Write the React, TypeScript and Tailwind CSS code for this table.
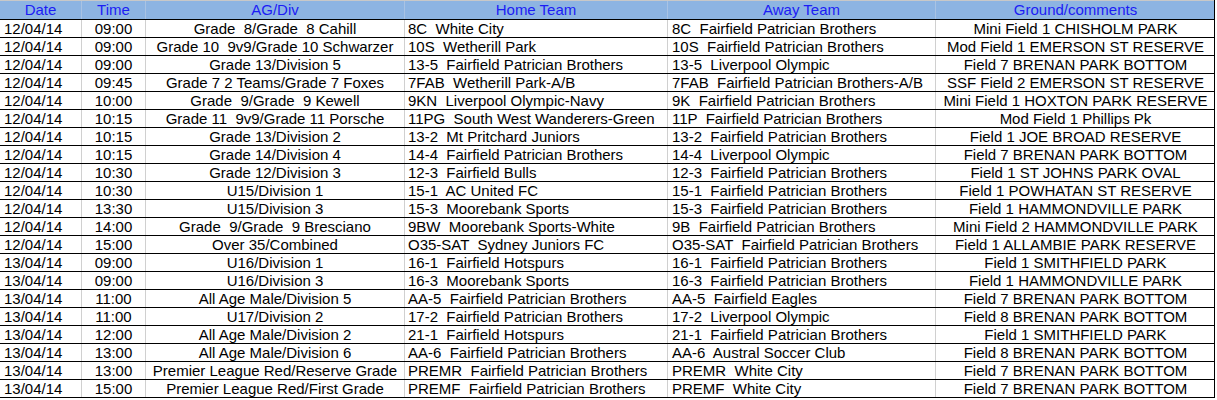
type Fixture = {
  date: string;
  time: string;
  div: string;
  home: string;
  away: string;
  ground: string;
};

const fixtures: Fixture[] = [
  { date: "12/04/14", time: "09:00", div: "Grade  8/Grade  8 Cahill", home: "8C  White City", away: "8C  Fairfield Patrician Brothers", ground: "Mini Field 1 CHISHOLM PARK" },
  { date: "12/04/14", time: "09:00", div: "Grade 10  9v9/Grade 10 Schwarzer", home: "10S  Wetherill Park", away: "10S  Fairfield Patrician Brothers", ground: "Mod Field 1 EMERSON ST RESERVE" },
  { date: "12/04/14", time: "09:00", div: "Grade 13/Division 5", home: "13-5  Fairfield Patrician Brothers", away: "13-5  Liverpool Olympic", ground: "Field 7 BRENAN PARK BOTTOM" },
  { date: "12/04/14", time: "09:45", div: "Grade 7 2 Teams/Grade 7 Foxes", home: "7FAB  Wetherill Park-A/B", away: "7FAB  Fairfield Patrician Brothers-A/B", ground: "SSF Field 2 EMERSON ST RESERVE" },
  { date: "12/04/14", time: "10:00", div: "Grade  9/Grade  9 Kewell", home: "9KN  Liverpool Olympic-Navy", away: "9K  Fairfield Patrician Brothers", ground: "Mini Field 1 HOXTON PARK RESERVE" },
  { date: "12/04/14", time: "10:15", div: "Grade 11  9v9/Grade 11 Porsche", home: "11PG  South West Wanderers-Green", away: "11P  Fairfield Patrician Brothers", ground: "Mod Field 1 Phillips Pk" },
  { date: "12/04/14", time: "10:15", div: "Grade 13/Division 2", home: "13-2  Mt Pritchard Juniors", away: "13-2  Fairfield Patrician Brothers", ground: "Field 1 JOE BROAD RESERVE" },
  { date: "12/04/14", time: "10:15", div: "Grade 14/Division 4", home: "14-4  Fairfield Patrician Brothers", away: "14-4  Liverpool Olympic", ground: "Field 7 BRENAN PARK BOTTOM" },
  { date: "12/04/14", time: "10:30", div: "Grade 12/Division 3", home: "12-3  Fairfield Bulls", away: "12-3  Fairfield Patrician Brothers", ground: "Field 1 ST JOHNS PARK OVAL" },
  { date: "12/04/14", time: "10:30", div: "U15/Division 1", home: "15-1  AC United FC", away: "15-1  Fairfield Patrician Brothers", ground: "Field 1 POWHATAN ST RESERVE" },
  { date: "12/04/14", time: "13:30", div: "U15/Division 3", home: "15-3  Moorebank Sports", away: "15-3  Fairfield Patrician Brothers", ground: "Field 1 HAMMONDVILLE PARK" },
  { date: "12/04/14", time: "14:00", div: "Grade  9/Grade  9 Bresciano", home: "9BW  Moorebank Sports-White", away: "9B  Fairfield Patrician Brothers", ground: "Mini Field 2 HAMMONDVILLE PARK" },
  { date: "12/04/14", time: "15:00", div: "Over 35/Combined", home: "O35-SAT  Sydney Juniors FC", away: "O35-SAT  Fairfield Patrician Brothers", ground: "Field 1 ALLAMBIE PARK RESERVE" },
  { date: "13/04/14", time: "09:00", div: "U16/Division 1", home: "16-1  Fairfield Hotspurs", away: "16-1  Fairfield Patrician Brothers", ground: "Field 1 SMITHFIELD PARK" },
  { date: "13/04/14", time: "09:00", div: "U16/Division 3", home: "16-3  Moorebank Sports", away: "16-3  Fairfield Patrician Brothers", ground: "Field 1 HAMMONDVILLE PARK" },
  { date: "13/04/14", time: "11:00", div: "All Age Male/Division 5", home: "AA-5  Fairfield Patrician Brothers", away: "AA-5  Fairfield Eagles", ground: "Field 7 BRENAN PARK BOTTOM" },
  { date: "13/04/14", time: "11:00", div: "U17/Division 2", home: "17-2  Fairfield Patrician Brothers", away: "17-2  Liverpool Olympic", ground: "Field 8 BRENAN PARK BOTTOM" },
  { date: "13/04/14", time: "12:00", div: "All Age Male/Division 2", home: "21-1  Fairfield Hotspurs", away: "21-1  Fairfield Patrician Brothers", ground: "Field 1 SMITHFIELD PARK" },
  { date: "13/04/14", time: "13:00", div: "All Age Male/Division 6", home: "AA-6  Fairfield Patrician Brothers", away: "AA-6  Austral Soccer Club", ground: "Field 8 BRENAN PARK BOTTOM" },
  { date: "13/04/14", time: "13:00", div: "Premier League Red/Reserve Grade", home: "PREMR  Fairfield Patrician Brothers", away: "PREMR  White City", ground: "Field 7 BRENAN PARK BOTTOM" },
  { date: "13/04/14", time: "15:00", div: "Premier League Red/First Grade", home: "PREMF  Fairfield Patrician Brothers", away: "PREMF  White City", ground: "Field 7 BRENAN PARK BOTTOM" },
];

const cols = "grid grid-cols-[82px_64px_259px_263px_268px_279px]";

export default function App() {
  return (
    <div className="w-[1217px] h-[400px] bg-white overflow-hidden font-['Liberation_Sans',Arial,sans-serif] text-[15px] text-black">
      <div className="w-[1215px] border-r border-black">
        {/* HEADER */}
        <div className={`${cols} border-t border-[#c8c8c8] border-b border-b-black bg-[#8db4e2] text-[#1c1cf5] leading-[18px] h-[20px]`}>
          <div className="text-center border-r border-[#a9c3e4]">Date</div>
          <div className="text-center border-r border-[#a9c3e4]">Time</div>
          <div className="text-center border-r border-[#a9c3e4]">AG/Div</div>
          <div className="text-center border-r border-[#a9c3e4]">Home Team</div>
          <div className="text-center border-r border-[#a9c3e4]">Away Team</div>
          <div className="text-center">Ground/comments</div>
        </div>

        {/* ROWS */}
        {fixtures.map((f, i) => (
          <div key={i} className={`${cols} h-[18px] leading-[17px] border-b border-black whitespace-pre`}>
            <div className="pl-[4px] border-r border-[#d0d0d0]">{f.date}</div>
            <div className="text-center border-r border-[#d0d0d0]">{f.time}</div>
            <div className="text-center border-r border-[#d0d0d0] overflow-hidden">{f.div}</div>
            <div className="pl-[3px] border-r border-[#d0d0d0] overflow-hidden">{f.home}</div>
            <div className="pl-[4px] border-r border-[#d0d0d0] overflow-hidden">{f.away}</div>
            <div className="text-center overflow-hidden">{f.ground}</div>
          </div>
        ))}
      </div>
    </div>
  );
}
